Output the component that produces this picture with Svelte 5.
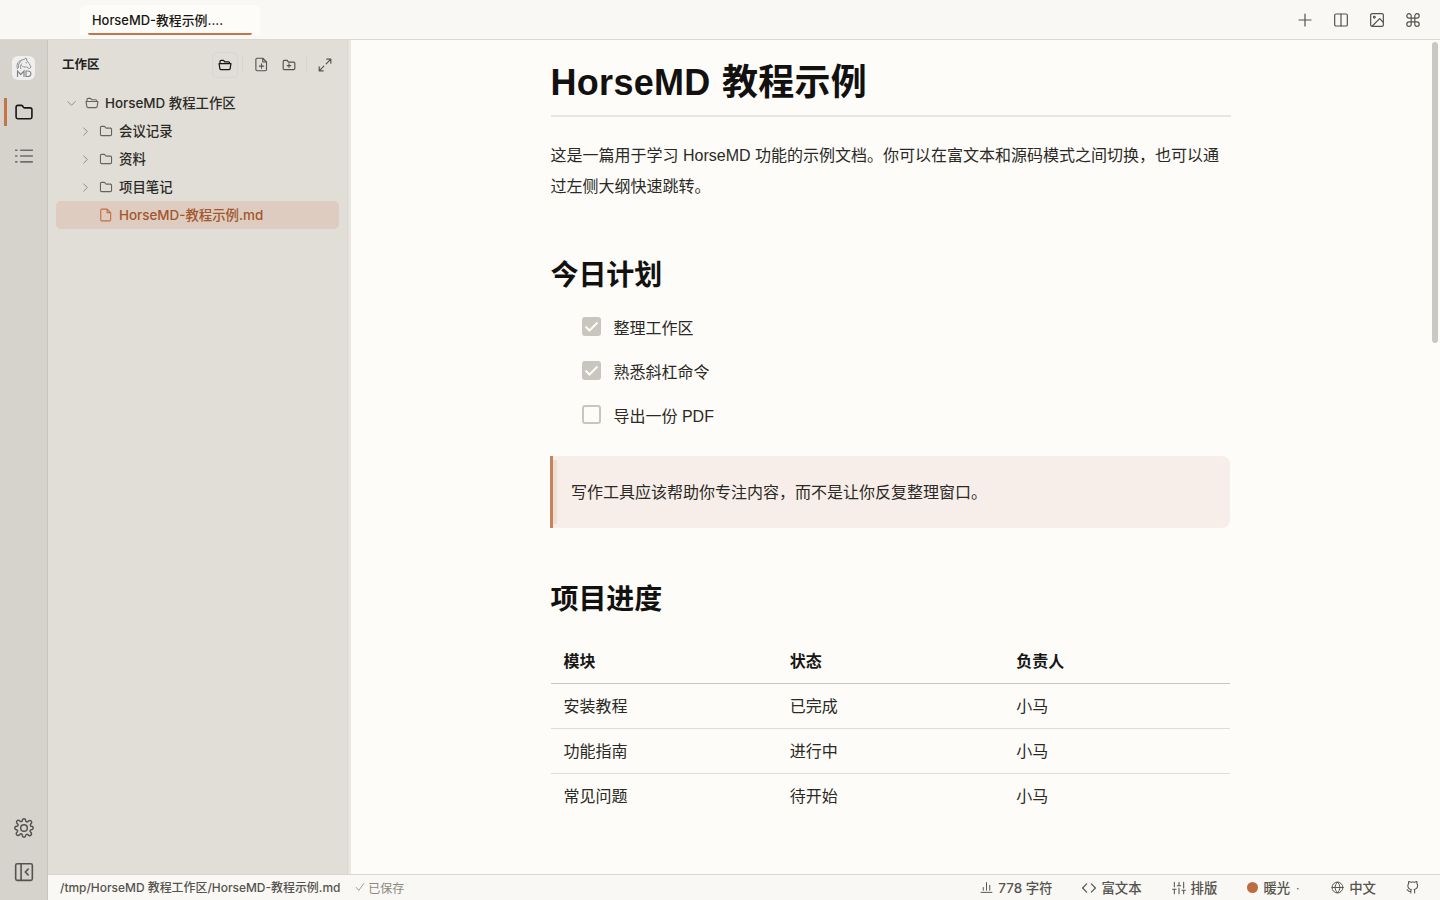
<script lang="ts">
  type IconDef = { body: string };

  const icons: Record<string, IconDef> = {
    plus: { body: '<path d="M12 3v18M3 12h18"/>' },
    columns: { body: '<rect x="2.500" y="3" width="19" height="18" rx="2"/><path d="M12 3v18"/>' },
    image: {
      body: '<rect x="2.500" y="2.500" width="19" height="19" rx="2"/><circle cx="8" cy="8" r="1.300"/><path d="M21 15l-5-5L5 21"/>',
    },
    command: {
      body: '<path d="M18 2.500a3.300 3.300 0 0 0-3.300 3.300v12.400a3.300 3.300 0 1 0 3.300-3.300H6a3.300 3.300 0 1 0 3.300 3.300V5.800a3.300 3.300 0 1 0-3.300 3.300h12a3.300 3.300 0 0 0 0-6.600z"/>',
    },
    folder: {
      body: '<path d="M2.500 18V6a2 2 0 0 1 2-2h4.200a2 2 0 0 1 1.600.8l1 1.400a2 2 0 0 0 1.600.8h6.600a2 2 0 0 1 2 2v9a2 2 0 0 1-2 2h-15a2 2 0 0 1-2-2z"/>',
    },
    folderOpen: {
      body: '<path d="M3.500 9.500V6a2 2 0 0 1 2-2h3.200a2 2 0 0 1 1.600.8L11.500 6.500h6.500a2 2 0 0 1 2 2v1M1.800 9.500h20.400l-1.400 8.800a2 2 0 0 1-2 1.700H5.200a2 2 0 0 1-2-1.700z"/>',
    },
    folderPlus: {
      body: '<path d="M2 18V6a2 2 0 0 1 2-2h5l2 3h9a2 2 0 0 1 2 2v9a2 2 0 0 1-2 2H4a2 2 0 0 1-2-2zM12 10v6M9 13h6"/>',
    },
    file: { body: '<path d="M14 2H5a2 2 0 0 0-2 2v16a2 2 0 0 0 2 2h13a2 2 0 0 0 2-2V8zM14 2v6h6"/>' },
    filePlus: {
      body: '<path d="M14 2H5a2 2 0 0 0-2 2v16a2 2 0 0 0 2 2h13a2 2 0 0 0 2-2V8zM14 2v6h6M12 11v7M8.500 14.500h7"/>',
    },
    expand: { body: '<path d="M15 2h7v7M22 2l-8 8M9 22H2v-7M2 22l8-8"/>' },
    list: { body: '<path d="M8 5h14M8 12h14M8 19h14M2 5h1.500M2 12h1.500M2 19h1.500"/>' },
    down: { body: '<path d="M4 8l8 8 8-8"/>' },
    right: { body: '<path d="M8 4l8 8-8 8"/>' },
    gear: {
      body: '<circle cx="12" cy="12" r="4"/><path d="M19.400 15a1.650 1.650 0 0 0 .33 1.820l.5.5a2.200 2.200 0 1 1-3.100 3.100l-.5-.5a1.650 1.650 0 0 0-2.630 1.090V21a2 2 0 0 1-4 0v-.09a1.650 1.650 0 0 0-2.900-1.260l-.5.5a2.200 2.200 0 1 1-3.100-3.100l.5-.5A1.650 1.650 0 0 0 3.090 14H3a2 2 0 0 1 0-4h.09a1.650 1.650 0 0 0 1.260-2.900l-.5-.5a2.200 2.200 0 1 1 3.100-3.100l.5.5A1.650 1.650 0 0 0 10 3.090V3a2 2 0 0 1 4 0v.09a1.650 1.650 0 0 0 2.820 1.180l.5-.5a2.200 2.200 0 1 1 3.100 3.100l-.5.5A1.650 1.650 0 0 0 20.910 10H21a2 2 0 0 1 0 4h-.09a1.650 1.650 0 0 0-1.510 1z"/>',
    },
    collapse: { body: '<rect x="2" y="2" width="20" height="20" rx="2"/><path d="M8.500 2v20M17 8.500L13.500 12l3.500 3.500"/>' },
    chart: { body: '<path d="M2 21h20M6 17v-5M12 17V3M18 17V8"/>' },
    code: { body: '<path d="M8 5l-7 7 7 7M16 5l7 7-7 7"/>' },
    sliders: {
      body: '<path d="M4 22v-8M4 10V2M12 22V12M12 8V2M20 22v-6M20 12V2M1 14h6M9 8h6M17 16h6"/>',
    },
    globe: {
      body: '<circle cx="12" cy="12" r="10"/><path d="M2 12h20M12 2c6 5.500 6 14.500 0 20M12 2c-6 5.500-6 14.500 0 20"/>',
    },
    check: { body: '<path d="M3 13l6 7L21 4"/>' },
    github: {
      body: '<path d="M9 19c-5 1.500-5-2.500-7-3m14 6v-3.870a3.370 3.370 0 0 0-.94-2.610c3.140-.35 6.440-1.540 6.440-7A5.440 5.440 0 0 0 20 4.770 5.070 5.070 0 0 0 19.910 1S18.730.65 16 2.480a13.380 13.380 0 0 0-7 0C6.270.65 5.090 1 5.090 1A5.070 5.070 0 0 0 5 4.770a5.440 5.440 0 0 0-1.500 3.780c0 5.420 3.300 6.610 6.440 7A3.370 3.370 0 0 0 9 18.130V22"/>',
    },
  };

  const folders = ["会议记录", "资料", "项目笔记"];

  const tasks = [
    { text: "整理工作区", done: true },
    { text: "熟悉斜杠命令", done: true },
    { text: "导出一份 PDF", done: false },
  ];

  const rows = [
    ["安装教程", "已完成", "小马"],
    ["功能指南", "进行中", "小马"],
    ["常见问题", "待开始", "小马"],
  ];
</script>

{#snippet icon(name: string, size: number, stroke = 1.8)}
  <svg
    class="icon"
    width={size}
    height={size}
    viewBox="0 0 24 24"
    fill="none"
    stroke="currentColor"
    stroke-width={stroke}
    stroke-linecap="round"
    stroke-linejoin="round"
    aria-hidden="true"
  >
    {@html icons[name].body}
  </svg>
{/snippet}

<div class="app">
  <header class="topbar">
    <div class="tab"><span>HorseMD-教程示例....</span></div>
    <div class="actions">
      <button aria-label="新建">{@render icon("plus", 16, 1.8)}</button>
      <button aria-label="分栏">{@render icon("columns", 16, 1.8)}</button>
      <button aria-label="图片">{@render icon("image", 16, 1.8)}</button>
      <button aria-label="命令">{@render icon("command", 16, 1.8)}</button>
    </div>
  </header>

  <div class="main">
    <nav class="rail">
      <div class="logo">
        <svg width="23" height="24" viewBox="0 0 23 24" fill="none" stroke="#85878c" stroke-width="0.9">
          <path d="M5.500 13C4 8 6 4.500 12 3.500L14 2l1 3c1.500 1 2.500 3.500 4 6l-1.500 1.700-3-1.700c-2 .3-3.500 0-5-1.500M9 13c-1-2-.5-4 1-5.500M6.500 12c-.5-3 .5-5.500 3-7M13.500 6.500l1.500.5" />
          <path d="M5.500 21v-6l3.200 3.500L12 15v6M14 15v5.500h1.500c4.500 0 4.500-5.500 0-5.500z" stroke-width="1.200" />
        </svg>
      </div>
      <button class="rail-btn active" aria-label="文件">{@render icon("folder", 20, 1.9)}</button>
      <button class="rail-btn list" aria-label="大纲">{@render icon("list", 20, 1.9)}</button>
      <span class="spacer"></span>
      <button class="rail-btn" aria-label="设置">{@render icon("gear", 20, 1.8)}</button>
      <button class="rail-btn" aria-label="收起">{@render icon("collapse", 20, 1.9)}</button>
    </nav>

    <div class="column">
      <div class="workspace">
        <aside class="sidebar">
          <div class="side-head">
            <strong>工作区</strong>
            <button class="boxed" aria-label="打开">{@render icon("folderOpen", 14, 2.1)}</button>
            <i class="divider"></i>
            <button class="new-file" aria-label="新建文件">{@render icon("filePlus", 15, 1.8)}</button>
            <button aria-label="新建文件夹">{@render icon("folderPlus", 14, 2)}</button>
            <i class="divider second"></i>
            <button aria-label="展开">{@render icon("expand", 14, 2)}</button>
          </div>

          <div class="tree">
            <div class="node root">
              <span class="chevron">{@render icon("down", 11, 1.9)}</span>
              {@render icon("folderOpen", 14, 1.9)}
              <span class="label">HorseMD 教程工作区</span>
            </div>
            {#each folders as name}
              <div class="node">
                <span class="chevron">{@render icon("right", 11, 1.9)}</span>
                {@render icon("folder", 14, 1.9)}
                <span class="label">{name}</span>
              </div>
            {/each}
            <div class="node selected">
              <span class="chevron"></span>
              {@render icon("file", 14, 1.9)}
              <span class="label">HorseMD-教程示例.md</span>
            </div>
          </div>
        </aside>
        <div class="resizer"></div>

        <main class="editor">
          <article>
            <h1>HorseMD 教程示例</h1>
            <p>这是一篇用于学习 HorseMD 功能的示例文档。你可以在富文本和源码模式之间切换，也可以通过左侧大纲快速跳转。</p>

            <h2>今日计划</h2>
            <ul>
              {#each tasks as task}
                <li>
                  <span class="box" class:done={task.done}>
                    {#if task.done}
                      <svg width="19" height="19" viewBox="0 0 19 19" fill="none" stroke="#fdfcf8" stroke-width="2">
                        <path d="M3.500 9.500l4 4 8-8" />
                      </svg>
                    {/if}
                  </span>
                  <span class="task">{task.text}</span>
                </li>
              {/each}
            </ul>

            <blockquote>写作工具应该帮助你专注内容，而不是让你反复整理窗口。</blockquote>

            <h2 class="progress">项目进度</h2>
            <table>
              <thead>
                <tr><th>模块</th><th>状态</th><th>负责人</th></tr>
              </thead>
              <tbody>
                {#each rows as row}
                  <tr>
                    {#each row as cell}<td>{cell}</td>{/each}
                  </tr>
                {/each}
              </tbody>
            </table>
          </article>
          <div class="scrollbar"></div>
        </main>
      </div>

      <footer class="status">
        <span class="path">/tmp/HorseMD 教程工作区/HorseMD-教程示例.md</span>
        <span class="saved">{@render icon("check", 10, 2)}<span>已保存</span></span>
        <span class="spacer"></span>
        <span class="item">{@render icon("chart", 13, 1.8)}<span>778 字符</span></span>
        <span class="item">{@render icon("code", 14, 2)}<span>富文本</span></span>
        <span class="item">{@render icon("sliders", 14, 1.8)}<span>排版</span></span>
        <span class="item theme"><i class="swatch"></i><span>暖光</span><small>·</small></span>
        <span class="item">{@render icon("globe", 13, 1.8)}<span>中文</span></span>
        <span class="item">{@render icon("github", 13, 1.9)}</span>
      </footer>
    </div>
  </div>
</div>

<style>
  :global(body) {
    margin: 0;
    overflow: hidden;
  }
  .app {
    width: 1440px;
    height: 900px;
    display: flex;
    flex-direction: column;
    background: #fdfcf8;
    color: #22211e;
    font-family: Inter, "Noto Sans CJK SC", sans-serif;
    font-size: 13.4px;
  }
  .app * {
    box-sizing: border-box;
  }
  .icon {
    display: block;
    flex: none;
  }
  button {
    display: grid;
    place-items: center;
    padding: 0;
    border: 0;
    background: none;
    color: #55534e;
  }
  .spacer {
    flex: 1;
  }

  .topbar {
    height: 40px;
    flex: none;
    display: flex;
    justify-content: space-between;
    padding: 5px 13px 0 80px;
    background: #f9f8f4;
    border-bottom: 1px solid #d9d7d0;
  }
  .tab {
    width: 180px;
    height: 30px;
    padding: 0 8px;
    border-radius: 6px 6px 0 0;
    background: #fdfcf8;
    font-size: 12.9px;
    font-weight: 500;
    color: #171613;
  }
  .tab span {
    display: block;
    height: 30px;
    padding-left: 4px;
    line-height: 31px;
    white-space: nowrap;
    border-bottom: 2px solid #c4744a;
    border-radius: 2px;
  }
  .actions {
    display: flex;
    gap: 8px;
  }
  .actions button {
    width: 28px;
    height: 29px;
  }

  .main {
    flex: 1;
    min-height: 0;
    display: flex;
  }
  .rail {
    width: 48px;
    flex: none;
    display: flex;
    flex-direction: column;
    align-items: center;
    padding: 16px 0 6px;
    background: #d6d3cc;
    border-right: 1px solid #c8c5be;
  }
  .logo {
    width: 23px;
    height: 24px;
    margin-bottom: 10px;
    border-radius: 6px;
    background: #efefed;
  }
  .rail-btn {
    width: 100%;
    height: 44px;
    flex: none;
  }
  .rail-btn.list {
    color: #706e68;
  }
  .rail-btn.active {
    color: #171613;
    background: linear-gradient(#c5744a, #c5744a) 3.5px 8px / 3px 28px no-repeat;
  }

  .column {
    flex: 1;
    min-width: 0;
    display: flex;
    flex-direction: column;
  }
  .workspace {
    flex: 1;
    min-height: 0;
    display: flex;
  }
  .sidebar {
    width: 300px;
    flex: none;
    background: #e1ded7;
    border-right: 1px solid #d9d6cf;
  }
  .resizer {
    width: 3px;
    flex: none;
    background: #e9e6e0;
  }
  .side-head {
    display: flex;
    align-items: center;
    height: 49px;
    padding: 0 8px 0 14px;
    font-size: 12.5px;
  }
  .side-head strong {
    flex: 1;
    padding-bottom: 2px;
    font-weight: 600;
  }
  .side-head button {
    width: 28px;
    height: 26px;
  }
  .side-head .boxed {
    width: 26px;
    height: 26px;
    border: 1px solid #dad7d0;
    border-radius: 5px;
    color: #171613;
  }
  .divider {
    width: 1px;
    height: 16px;
    margin: 0 4px;
    background: #d8d5ce;
  }
  .divider.second {
    margin: 0 4px 0 3px;
  }
  .tree {
    padding: 0 8px;
  }
  .node {
    height: 28px;
    display: flex;
    align-items: center;
    padding-left: 22px;
    border-radius: 5px;
    font-weight: 500;
    color: #2b2a26;
  }
  .node.root {
    padding-left: 8px;
  }
  .node > :global(.icon) {
    margin-right: 6.5px;
    color: #66635d;
  }
  .label {
    padding-bottom: 2px;
  }
  .chevron {
    width: 14px;
    margin-right: 6.5px;
    display: grid;
    place-items: center;
    color: #85827a;
  }
  .node.selected {
    background: #ddccbf;
    color: #a1562e;
  }
  .node.selected > :global(.icon) {
    color: #c56d3d;
  }

  .editor {
    flex: 1;
    min-width: 0;
    display: flex;
    justify-content: space-between;
    padding: 2px 2px 0 199.5px;
    font-family: "Liberation Sans", "Noto Sans CJK SC", sans-serif;
    font-size: 16px;
    color: #2a2925;
  }
  article {
    width: 680px;
  }
  h1,
  h2 {
    margin: 0;
    font-weight: 700;
    color: #12110f;
  }
  h1 {
    height: 75px;
    font-size: 36px;
    line-height: 82px;
    letter-spacing: 0.3px;
    word-spacing: 1px;
    border-bottom: 2px solid #e8e6e2;
  }
  p {
    margin: 23px 0 0;
    line-height: 31px;
  }
  h2 {
    margin-top: 54px;
    font-size: 28px;
    line-height: 40px;
    letter-spacing: -0.1px;
  }
  ul {
    list-style: none;
    margin: 10px 0 0;
    padding: 0 0 0 31px;
  }
  li {
    height: 44px;
    display: flex;
    align-items: center;
    gap: 13px;
  }
  .box {
    width: 19px;
    height: 19px;
    margin-top: -3px;
    border: 2px solid #c9c6bf;
    border-radius: 3px;
  }
  .box svg {
    display: block;
    margin: -2px;
  }
  .box.done {
    background: #c9c6bf;
  }
  .task {
    padding-bottom: 2px;
  }
  blockquote {
    height: 72px;
    margin: 18px 0.5px 0 -0.5px;
    padding-left: 18px;
    border-left: 3px solid #c48359;
    border-radius: 0 8px 8px 0;
    line-height: 74px;
    background:
      linear-gradient(#f0dfd1, #f0dfd1) 0 4px / 4px 64px no-repeat,
      #f8eee9;
  }
  .progress {
    margin-top: 52px;
  }
  table {
    width: 679px;
    margin: 18px 0 0 0.5px;
    border-collapse: separate;
    border-spacing: 0;
    table-layout: fixed;
  }
  th,
  td {
    height: 45px;
    padding: 0 12px 2px 12.5px;
    text-align: left;
    border-bottom: 1px solid #dfddd7;
  }
  th {
    height: 46px;
    padding-bottom: 1px;
    font-weight: 700;
    color: #171613;
    border-color: #c9c6bf;
  }
  tr:last-child td {
    border-color: transparent;
  }
  .scrollbar {
    width: 6px;
    height: 301px;
    border-radius: 3px;
    background: #cac8c2;
  }

  .status {
    height: 26px;
    flex: none;
    display: flex;
    align-items: center;
    padding: 0 21px 0 12px;
    background: #f9f8f4;
    border-top: 1px solid #d9d7d0;
    color: #55534e;
    white-space: nowrap;
  }
  .path {
    padding-bottom: 2px;
    font-size: 11.94px;
    font-weight: 500;
  }
  .saved {
    display: flex;
    align-items: center;
    gap: 3px;
    margin-left: 15px;
    padding-bottom: 1px;
    font-size: 12px;
    color: #8b8880;
  }
  .item {
    display: flex;
    align-items: center;
    gap: 5px;
    font-weight: 500;
  }
  .item span {
    padding-bottom: 2px;
  }
  .item + .item {
    margin-left: 30px;
  }
  .swatch {
    width: 11px;
    height: 11px;
    border-radius: 50%;
    background: #bd6c3f;
  }
  small {
    margin: 0 2px 0 1px;
    font-size: 10px;
  }
</style>
